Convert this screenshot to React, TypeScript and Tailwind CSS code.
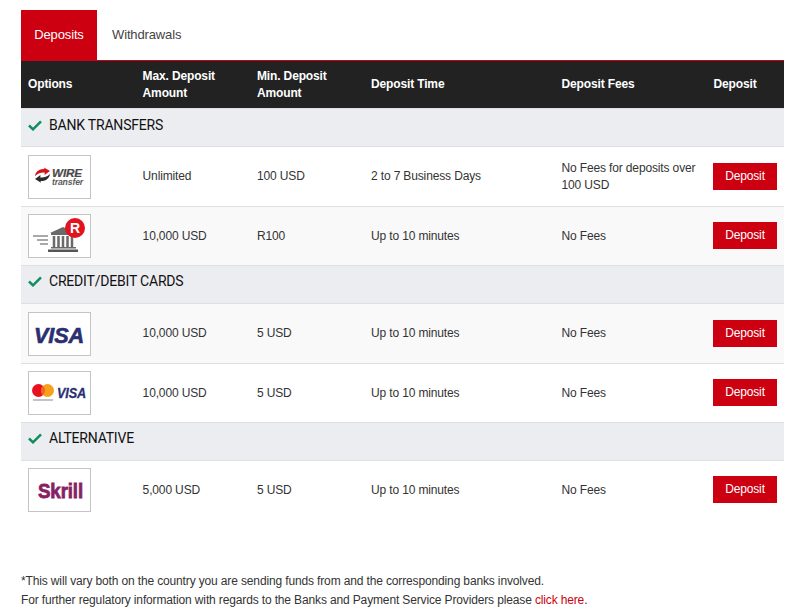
import type { ReactNode } from "react";

const logoFont = "Liberation Sans, sans-serif";

function WireLogo() {
  return (
    <svg width="61" height="42" viewBox="0 0 61 42">
      <path d="M6 20c.5-4.500 4.500-7.500 9.500-7l-.5-1.500 6 3.500-5.500 4 .2-2.500c-3.500-.3-6.500.5-9.700 3.500z" fill="#d8121a" />
      <path d="M21 18c-.5 4.500-4.500 7.500-9.500 7l.5 1.800-6-3.800 5.500-4-.2 2.500c3.500.3 6.500-.5 9.700-3.500z" fill="#2b2b2b" />
      <text x="23" y="21" fontFamily={logoFont} fontSize="11.500" fontWeight="700" fontStyle="italic" fill="#4a4a4a" stroke="#4a4a4a" strokeWidth="0.200" textLength="30" lengthAdjust="spacingAndGlyphs">WIRE</text>
      <text x="23" y="28.500" fontFamily={logoFont} fontSize="8.500" fontWeight="700" fontStyle="italic" fill="#5a5a5a" textLength="31" lengthAdjust="spacingAndGlyphs">transfer</text>
    </svg>
  );
}

function BankLogo() {
  return (
    <svg width="61" height="42" viewBox="0 0 61 42">
      <path d="M4 21h15M8 25h11M11 29h8" stroke="#555" strokeWidth="1.200" />
      <path d="M21 18l13-6 13 6z" fill="#6a6a6a" />
      <rect x="22" y="18" width="25" height="2" fill="#6a6a6a" />
      <path d="M25 21v11M29.500 21v11M34 21v11M38.500 21v11M43 21v11" stroke="#6a6a6a" strokeWidth="2.500" />
      <rect x="22" y="32" width="25" height="1.500" fill="#6a6a6a" />
      <rect x="19" y="34.500" width="30" height="2.500" fill="#555" />
      <circle cx="46" cy="13" r="10" fill="#e2131f" />
      <text x="46" y="18" textAnchor="middle" fontFamily={logoFont} fontSize="14" fontWeight="700" fill="#fff">R</text>
    </svg>
  );
}

function VisaLogo() {
  return (
    <svg width="61" height="42" viewBox="0 0 61 42">
      <text x="5" y="30" fontFamily={logoFont} fontSize="22" fontWeight="700" fontStyle="italic" fill="#2a2f73" stroke="#2a2f73" strokeWidth="0.600" textLength="50" lengthAdjust="spacingAndGlyphs">VISA</text>
    </svg>
  );
}

function CardsLogo() {
  return (
    <svg width="61" height="42" viewBox="0 0 61 42">
      <circle cx="9.500" cy="18.500" r="6.500" fill="#e8101f" />
      <circle cx="18.500" cy="18.500" r="6.500" fill="#f8a01c" />
      <path d="M14 13.800a6.500 6.500 0 0 1 0 9.400 6.500 6.500 0 0 1 0-9.400z" fill="#f2641f" />
      <rect x="4" y="27" width="20" height="2" fill="#c4c4c4" />
      <text x="28" y="26" fontFamily={logoFont} fontSize="14" fontWeight="700" fontStyle="italic" fill="#2a2f73" stroke="#2a2f73" strokeWidth="0.300" textLength="29" lengthAdjust="spacingAndGlyphs">VISA</text>
    </svg>
  );
}

function SkrillLogo() {
  return (
    <svg width="61" height="42" viewBox="0 0 61 42">
      <text x="9" y="29" fontFamily={logoFont} fontSize="21" fontWeight="700" fill="#862165" stroke="#862165" strokeWidth="0.800" textLength="45" lengthAdjust="spacingAndGlyphs">Skrill</text>
    </svg>
  );
}

type Row = {
  id: string;
  logo: ReactNode;
  max: string;
  min: string;
  time: string;
  fees: string;
  shaded: boolean;
  tall?: boolean;
  noLine?: boolean;
};

type Section = { title: string; rows: Row[] };

const sections: Section[] = [
  {
    title: "BANK TRANSFERS",
    rows: [
      { id: "wire", logo: <WireLogo />, max: "Unlimited", min: "100 USD", time: "2 to 7 Business Days", fees: "No Fees for deposits over 100 USD", shaded: false, tall: true },
      { id: "bank", logo: <BankLogo />, max: "10,000 USD", min: "R100", time: "Up to 10 minutes", fees: "No Fees", shaded: true },
    ],
  },
  {
    title: "CREDIT/DEBIT CARDS",
    rows: [
      { id: "visa", logo: <VisaLogo />, max: "10,000 USD", min: "5 USD", time: "Up to 10 minutes", fees: "No Fees", shaded: true, tall: true },
      { id: "cards", logo: <CardsLogo />, max: "10,000 USD", min: "5 USD", time: "Up to 10 minutes", fees: "No Fees", shaded: false },
    ],
  },
  {
    title: "ALTERNATIVE",
    rows: [{ id: "skrill", logo: <SkrillLogo />, max: "5,000 USD", min: "5 USD", time: "Up to 10 minutes", fees: "No Fees", shaded: false, noLine: true }],
  },
];

const gridCols = "grid grid-cols-[114.600px_114.400px_114px_190.500px_152px_1fr] items-center";

export default function App() {
  return (
    <div className="min-h-[614px] bg-white px-[21px] pt-[10px] font-['Liberation_Sans',Arial,sans-serif] text-xs tracking-[-0.14px] text-[#333]">
      <div className="flex h-[50px] items-center text-[13px]">
        <div className="flex h-full w-[76px] items-center justify-center bg-[#cc0011] text-white">Deposits</div>
        <div className="ml-[15px] text-[#444]">Withdrawals</div>
      </div>

      <div className="border-t border-[#cc0011]">
        <div className={`${gridCols} h-[47px] bg-[#222] font-bold leading-[17px] text-white`}>
          <div className="px-[7px]">Options</div>
          <div className="px-[7px]">Max. Deposit Amount</div>
          <div className="px-[7px]">Min. Deposit Amount</div>
          <div className="px-[7px]">Deposit Time</div>
          <div className="px-[7px]">Deposit Fees</div>
          <div className="px-[7px]">Deposit</div>
        </div>

        <div className="h-px bg-[#dfdfe3]" />

        {sections.map((section, i) => (
          <div key={section.title}>
            <div className={`flex h-[38px] items-center gap-[7px] border-b border-[#dfdfe3] bg-[#ecedf1] px-[7px] font-['Roboto',sans-serif] text-[14px] tracking-[-0.2px] text-[#111] ${i === 0 ? "pb-[5px]" : "pb-[7px]"}`}>
              <svg width="14" height="11" viewBox="0 0 14 11">
                <path d="M1 5.500l4 3.800 8-8" fill="none" stroke="#0e8f5b" strokeWidth="2.500" />
              </svg>
              {section.title}
            </div>
            {section.rows.map((row) => (
              <div
                key={row.id}
                className={`${gridCols} ${row.tall ? "h-[60px]" : "h-[59px]"} border-b leading-[17px] ${row.noLine ? "border-white" : "border-[#dfdfe3]"} ${row.shaded ? "bg-[#f9f9f9]" : "bg-white"}`}
              >
                <div className="px-[7px]">
                  <div className="flex h-[44px] w-[63px] items-center justify-center border border-[#c4c4c4] bg-white">{row.logo}</div>
                </div>
                <div className="px-[7px]">{row.max}</div>
                <div className="px-[7px]">{row.min}</div>
                <div className="px-[7px]">{row.time}</div>
                <div className="px-[7px]">{row.fees}</div>
                <div className={`px-[6.500px] ${row.tall ? "" : "mb-px"}`}>
                  <button className="block h-[27px] w-[64px] bg-[#cc0011] text-white">Deposit</button>
                </div>
              </div>
            ))}
          </div>
        ))}
      </div>

      <div className="mt-[52px] leading-[19px]">
        <p>*This will vary both on the country you are sending funds from and the corresponding banks involved.</p>
        <p>
          For further regulatory information with regards to the Banks and Payment Service Providers please{" "}
          <a className="text-[#cc0011]">click here</a>.
        </p>
      </div>
    </div>
  );
}
